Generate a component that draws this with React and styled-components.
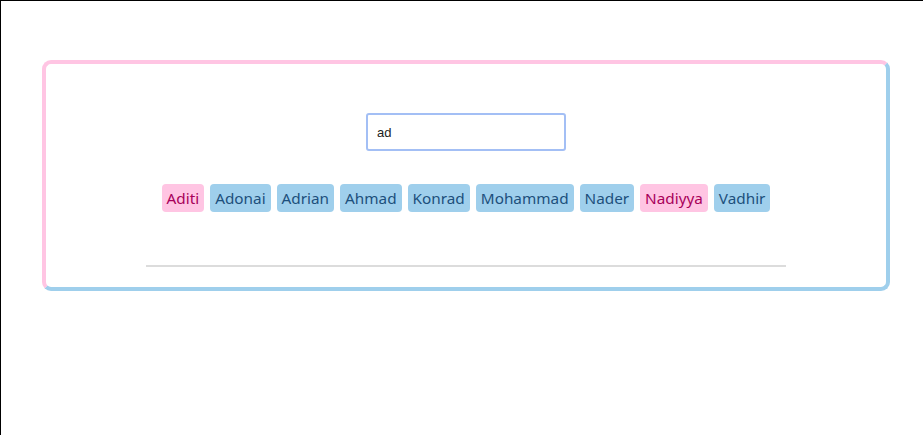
import React from "react";
import styled, { createGlobalStyle } from "styled-components";

const names = [
  { name: "Aditi", tone: "pink" },
  { name: "Adonai", tone: "blue" },
  { name: "Adrian", tone: "blue" },
  { name: "Ahmad", tone: "blue" },
  { name: "Konrad", tone: "blue" },
  { name: "Mohammad", tone: "blue" },
  { name: "Nader", tone: "blue" },
  { name: "Nadiyya", tone: "pink" },
  { name: "Vadhir", tone: "blue" }
];

const tones = {
  pink: { bg: "#ffc5e3", fg: "#a8005a" },
  blue: { bg: "#9fcfec", fg: "#1d4f7c" }
};

function App() {
  return (
    <Page>
      <GlobalStyle />
      <Card>
        <Search defaultValue="ad" autoFocus />
        <TagRow>
          {names.map(n => (
            <Tag key={n.name} tone={n.tone}>
              {n.name}
            </Tag>
          ))}
        </TagRow>
        <Rule />
      </Card>
    </Page>
  );
}

const GlobalStyle = createGlobalStyle`
  html, body {
    margin: 0;
    background: #fff;
  }
  * {
    box-sizing: border-box;
  }
`;

const Page = styled.div`
  min-height: 100vh;
  border-top: 1px solid #000;
  border-left: 1px solid #000;
  padding: 59px 0 0 41px;
`;

const Card = styled.div`
  width: 848px;
  height: 231px;
  border: 4px solid;
  border-color: #ffc5e3 #9fcfec #9fcfec #ffc5e3;
  border-radius: 9px;
  padding-top: 49px;
  display: flex;
  flex-direction: column;
  align-items: center;
`;

const Search = styled.input`
  width: 200px;
  height: 38px;
  border: 2px solid #a3bff5;
  border-radius: 3px;
  padding: 0 9px;
  font-family: "Liberation Sans", Arial, sans-serif;
  font-size: 13px;
  color: #222;
  outline: none;
  caret-color: #000;
`;

const TagRow = styled.div`
  margin-top: 33px;
  display: flex;
  justify-content: center;
  gap: 6px;
`;

const Tag = styled.span`
  display: flex;
  align-items: center;
  height: 28px;
  padding: 0 5px;
  border-radius: 4px;
  font-family: "Noto Sans", "Open Sans", sans-serif;
  font-size: 15.3px;
  background: ${p => tones[p.tone].bg};
  color: ${p => tones[p.tone].fg};
`;

const Rule = styled.div`
  width: 640px;
  height: 2px;
  margin-top: 53px;
  background: #dcdcdc;
`;

export default App;
